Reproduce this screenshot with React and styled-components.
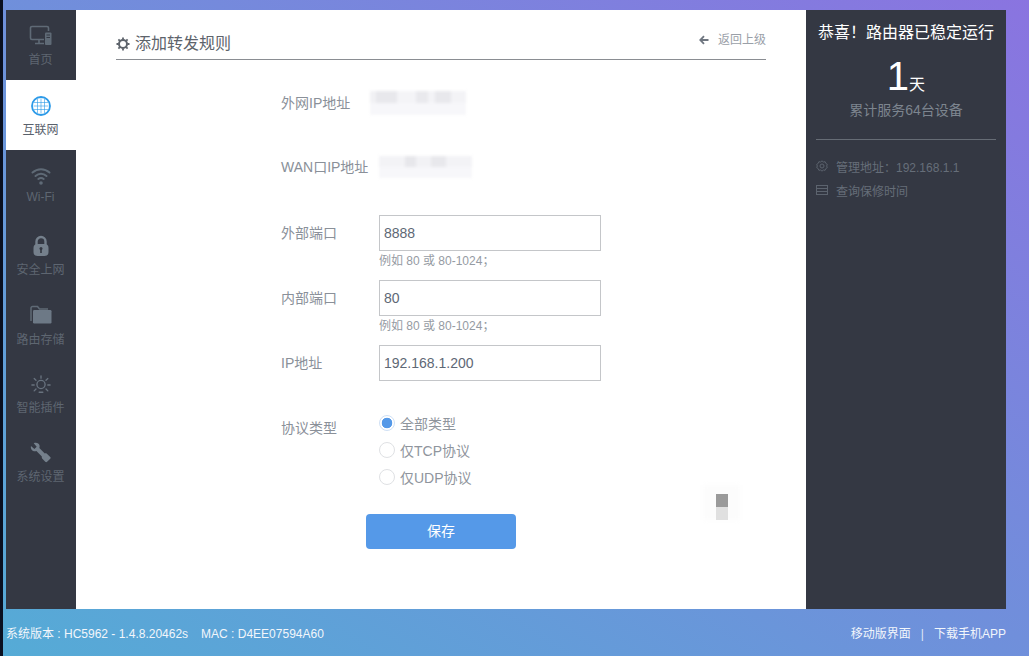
import styled, { createGlobalStyle } from 'styled-components'

const Global = createGlobalStyle`
  html, body { margin: 0; padding: 0; height: 100%; }
  body {
    font-family: "Liberation Sans", "Noto Sans CJK SC", sans-serif;
    overflow: hidden;
  }
  * { box-sizing: border-box; }
`

const Page = styled.div`
  width: 1029px;
  height: 656px;
  padding-top: 10px;
  border-left: 3px solid #0a1020;
  background: linear-gradient(to top right, #55abd6, #8a74e0);
  display: flex;
  flex-direction: column;
`

const Shell = styled.div`
  width: 1000px;
  height: 599px;
  margin-left: 3px;
  display: flex;
`

const Sidebar = styled.nav`
  width: 70px;
  background: #343843;
  flex-shrink: 0;
`

const NavItem = styled.div`
  height: 70px;
  padding-top: ${({ $top }) => $top}px;
  padding-right: 1px;
  display: flex;
  flex-direction: column;
  align-items: center;
  background: ${({ $active }) => ($active ? '#fff' : 'transparent')};
  color: ${({ $active }) => ($active ? '#59616c' : '#5e6671')};
`

const NavIcon = styled.div`
  height: 24px;
  display: flex;
  align-items: center;
  justify-content: center;
  color: #5f6a76;
`

const NavLabel = styled.span`
  margin-top: ${({ $gap }) => $gap}px;
  font-size: 12px;
  line-height: 16px;
  white-space: nowrap;
`

const Main = styled.main`
  position: relative;
  width: 730px;
  background: #fff;
  padding: 0 40px;
  flex-shrink: 0;
`

const Header = styled.header`
  height: 50px;
  display: flex;
  align-items: flex-end;
  justify-content: space-between;
  border-bottom: 1px solid #8a8d92;
`

const Title = styled.h1`
  margin: 0 0 4px;
  display: flex;
  align-items: center;
  gap: 5px;
  font-size: 16px;
  line-height: 22px;
  font-weight: 400;
  color: #5d636b;
`

const BackLink = styled.a`
  margin: 0 0 10px 0;
  display: flex;
  align-items: center;
  gap: 9px;
  font-size: 12px;
  line-height: 18px;
  color: #9aa0a8;
`

const Form = styled.form`
  display: flex;
  flex-direction: column;
`

const Row = styled.div`
  margin-top: ${({ $top }) => $top}px;
  padding-left: 165px;
  display: flex;
  align-items: ${({ $align }) => $align || 'center'};
`

const Label = styled.label`
  width: ${({ $width }) => $width || 98}px;
  flex-shrink: 0;
  font-size: 14px;
  line-height: 20px;
  color: #8a9099;
  white-space: nowrap;
  padding-top: ${({ $pad }) => $pad || 0}px;
`

const Redacted = styled.div`
  width: ${({ $width }) => $width}px;
  height: ${({ $height }) => $height}px;
  background:
    ${({ $stops }) => `linear-gradient(to right, ${$stops})`} top / 100% 50% no-repeat,
    #f7f7fa;
  filter: blur(1.5px);
`

const Field = styled.div`
  height: 65px;
`

const TextInput = styled.input`
  display: block;
  width: 222px;
  height: 36px;
  padding: 0 4px;
  border: 1px solid #c4c6c9;
  border-radius: 0;
  outline: none;
  background: #fff;
  font-family: inherit;
  font-size: 14px;
  color: #5e6875;
`

const Hint = styled.div`
  margin-top: 1px;
  font-size: 12px;
  line-height: 18px;
  color: #959ba3;
`

const RadioGroup = styled.div`
  display: flex;
  flex-direction: column;
`

const RadioRow = styled.label`
  height: 27px;
  display: flex;
  align-items: center;
  gap: 5px;
  font-size: 14px;
  color: #8f959d;
`

const Radio = styled.input`
  appearance: none;
  margin: 0;
  width: 16px;
  height: 16px;
  border-radius: 50%;
  border: 1px solid #dfe1e4;
  background: #fff;

  &:checked {
    border-color: #cfe0f5;
    background: radial-gradient(circle, #5599e8 0 5px, #fff 5.6px);
  }
`

const SaveButton = styled.button`
  align-self: center;
  margin-top: 24px;
  width: 150px;
  height: 35px;
  padding: 0 0 3px;
  border: 0;
  border-radius: 4px;
  background: #5599e8;
  color: #fff;
  font-family: inherit;
  font-size: 14px;
`

const Smudge = styled.div`
  position: absolute;
  left: 627px;
  top: 475px;
  width: 37px;
  height: 35px;
  background: #fcfcfc;
  filter: blur(2px);
`

const SmudgeDark = styled.div`
  position: absolute;
  left: 640px;
  top: 484px;
  width: 12px;
  height: 13px;
  background: #9a9a9a;
  box-shadow: 0 13px 0 #e0e0e0;
`

const Aside = styled.aside`
  width: 200px;
  background: #343843;
  padding: 0 10px;
  flex-shrink: 0;
  text-align: center;
`

const AsideTitle = styled.div`
  margin-top: 12px;
  font-size: 16px;
  line-height: 22px;
  color: #fff;
  white-space: nowrap;
`

const Uptime = styled.div`
  margin-top: 8px;
  height: 48px;
  display: flex;
  align-items: baseline;
  justify-content: center;
  color: #fff;
  font-size: 16px;
`

const UptimeNumber = styled.span`
  font-size: 40px;
  line-height: 48px;
`

const Served = styled.div`
  font-size: 14px;
  line-height: 20px;
  color: #7d858f;
`

const Divider = styled.hr`
  margin: 19px 0 0;
  border: 0;
  border-top: 1px solid #666c75;
`

const InfoList = styled.div`
  margin-top: 14px;
  display: flex;
  flex-direction: column;
`

const InfoRow = styled.div`
  height: 24px;
  display: flex;
  align-items: center;
  gap: 8px;
  font-size: 12px;
  color: #666e79;
  white-space: nowrap;
`

const Footer = styled.footer`
  width: 1000px;
  height: 47px;
  margin-left: 3px;
  display: flex;
  align-items: center;
  justify-content: space-between;
  font-size: 12px;
  color: #f2f6fb;
`

const FooterGroup = styled.div`
  display: flex;
  align-items: baseline;
  gap: ${({ $gap }) => $gap}px;
`

const FooterSep = styled.span`
  color: #dfe8f5;
  font-weight: 400;
`

function MonitorIcon() {
  return (
    <svg width="24" height="22" viewBox="0 0 24 22" fill="none" stroke="currentColor" strokeWidth="1.6">
      <path d="M15 14.5H3a1.5 1.5 0 0 1-1.500-1.500V3A1.500 1.500 0 0 1 3 1.500h15A1.500 1.500 0 0 1 19.500 3v3" />
      <path d="M6 18.500h9M10 15v3.500" />
      <rect x="16" y="7.500" width="6.500" height="12.500" rx="1" fill="currentColor" stroke="none" />
      <path d="M17.500 10h3.500M17.500 12.500h3.500" stroke="#343843" strokeWidth="1" />
    </svg>
  )
}

function GlobeIcon() {
  return (
    <svg width="20" height="20" viewBox="0 0 20 20" fill="none" stroke="#2c9ae8">
      <circle cx="10" cy="10" r="9" strokeWidth="1.800" />
      <path
        d="M3 6.500h14M2.500 10h15M3 13.500h14M6.500 3v14M10 2.500v15M13.500 3v14"
        strokeWidth=".8"
        opacity=".75"
      />
    </svg>
  )
}

function WifiIcon() {
  return (
    <svg width="20" height="20" viewBox="0 0 20 20" fill="none" stroke="currentColor" strokeWidth="2" strokeLinecap="round">
      <path d="M1.500 6.500c5-4.500 12-4.500 17 0" />
      <path d="M4.500 10c3.200-3 7.800-3 11 0" />
      <path d="M7.300 13c1.700-1.300 3.700-1.300 5.400 0" />
      <circle cx="10" cy="17" r="1.800" fill="currentColor" stroke="none" />
    </svg>
  )
}

function LockIcon() {
  return (
    <svg width="18" height="22" viewBox="0 0 18 22">
      <path
        fill="none"
        stroke="#75808c"
        strokeWidth="2.400"
        d="M4.500 10V6.500a4.500 4.500 0 0 1 9 0V10"
      />
      <rect x="1.500" y="9" width="15" height="12" rx="4" fill="#75808c" />
      <circle cx="9" cy="13.500" r="1.500" fill="#343843" />
      <rect x="8.200" y="14" width="1.600" height="4" fill="#343843" />
    </svg>
  )
}

function FolderIcon() {
  return (
    <svg width="22" height="20" viewBox="0 0 22 20">
      <path d="M1 16V3a1.500 1.500 0 0 1 1.500-1.500h5L9.500 4H18" fill="none" stroke="#5f6a76" strokeWidth="1.500" />
      <rect x="3" y="5" width="18.500" height="13.500" rx="1.200" fill="#6d7986" />
    </svg>
  )
}

function SunIcon() {
  return (
    <svg width="20" height="21" viewBox="0 0 22 22" fill="none" stroke="#68727e" strokeWidth="1.500" strokeLinecap="round">
      <circle cx="11" cy="11" r="4.500" />
      <path d="M11 1.500v2.500M3.500 4.500l2 1.800M18.500 4.500l-2 1.800M1 11.500h2.500M18.500 11.500H21M5.500 16l-2 2M16.500 16l2 2M9 19.500h4" />
    </svg>
  )
}

function WrenchIcon() {
  return (
    <svg width="21" height="21" viewBox="0 0 22 22" fill="#75808c">
      <path d="M1 4.200 4.600 7.400 7 5 3.900 1.300C6.400.3 9.400 1.100 10 3.600c.2 1 .1 1.900-.2 2.700L15.500 12c.7-.2 1.500-.1 2.200.3l3.500 3.300c.6.600.6 1.300 0 1.900l-3.300 3.300c-.6.600-1.300.6-1.900 0l-3.300-3.500c-.4-.7-.5-1.500-.3-2.200L6.700 9.400c-.8.300-1.800.4-2.700.2C1.600 9 .4 6.500 1 4.200z" />
    </svg>
  )
}

function GearIcon() {
  return (
    <svg width="14" height="14" viewBox="0 0 14 14" fill="none" stroke="#5d636b" strokeWidth="2">
      <circle cx="7" cy="7" r="4" />
      <path strokeWidth="1.800" d="M7 .5v2M7 11.500v2M.5 7h2M11.500 7h2M2.400 2.400l1.400 1.400M10.200 10.200l1.400 1.400M11.600 2.400l-1.400 1.400M3.800 10.200l-1.400 1.400" />
    </svg>
  )
}

function SmallGearIcon() {
  return (
    <svg width="12" height="12" viewBox="0 0 12 12" fill="none" stroke="#5c636e" strokeWidth="1">
      <circle cx="6" cy="6" r="2" />
      <path d="M6 .8l1.300 1.200 1.800-.3.700 1.700 1.500 1-.6 1.600.6 1.600-1.500 1-.7 1.700-1.800-.3L6 11.200 4.700 10l-1.800.3-.7-1.700-1.500-1L1.300 6 .7 4.400l1.500-1 .7-1.700 1.800.3z" />
    </svg>
  )
}

function CardIcon() {
  return (
    <svg width="12" height="10" viewBox="0 0 12 10" fill="none" stroke="#5c636e" strokeWidth="1">
      <rect x=".5" y=".5" width="11" height="9" />
      <path d="M1 3.500h10M1 6.500h10" />
    </svg>
  )
}

function BackArrow() {
  return (
    <svg width="10" height="10" viewBox="0 0 10 10" fill="none" stroke="#6f7680" strokeWidth="1.800">
      <path d="M9.500 5H1.500M5 1.200 1.300 5 5 8.800" />
    </svg>
  )
}

const navItems = [
  { label: '首页', icon: <MonitorIcon />, top: 14, gap: 4 },
  { label: '互联网', icon: <GlobeIcon />, top: 14, gap: 4, active: true },
  { label: 'Wi-Fi', icon: <WifiIcon />, top: 14, gap: 1 },
  { label: '安全上网', icon: <LockIcon />, top: 14, gap: 4 },
  { label: '路由存储', icon: <FolderIcon />, top: 13, gap: 5 },
  { label: '智能插件', icon: <SunIcon />, top: 12, gap: 4 },
  { label: '系统设置', icon: <WrenchIcon />, top: 10, gap: 5 },
]

const wanStops = '#f3f3f6 0 28%, #e7e7eb 28% 40%, #f2f2f5 40% 56%, #e8e8ec 56% 72%, #f3f3f6 72%'
const lanStops = '#f1f1f4 0 6%, #e8e8ec 6% 28%, #f4f4f7 28% 48%, #e9e9ed 48% 60%, #f3f3f6 60% 68%, #e8e8ec 68% 84%, #f3f3f6 84%'

export default function App() {
  return (
    <Page>
      <Global />
      <Shell>
        <Sidebar>
          {navItems.map((item) => (
            <NavItem key={item.label} $active={item.active} $top={item.top}>
              <NavIcon>{item.icon}</NavIcon>
              <NavLabel $gap={item.gap}>{item.label}</NavLabel>
            </NavItem>
          ))}
        </Sidebar>

        <Main>
          <Header>
            <Title>
              <GearIcon />
              添加转发规则
            </Title>
            <BackLink>
              <BackArrow />
              返回上级
            </BackLink>
          </Header>

          <Form onSubmit={(e) => e.preventDefault()}>
            <Row $top={31}>
              <Label $width={89}>外网IP地址</Label>
              <Redacted $width={96} $height={24} $stops={lanStops} />
            </Row>
            <Row $top={41}>
              <Label>WAN口IP地址</Label>
              <Redacted $width={93} $height={22} $stops={wanStops} />
            </Row>

            <Row $top={37} $align="flex-start">
              <Label $pad={8}>外部端口</Label>
              <Field>
                <TextInput readOnly value="8888" />
                <Hint>例如 80 或 80-1024；</Hint>
              </Field>
            </Row>
            <Row $top={0} $align="flex-start">
              <Label $pad={8}>内部端口</Label>
              <Field>
                <TextInput readOnly value="80" />
                <Hint>例如 80 或 80-1024；</Hint>
              </Field>
            </Row>
            <Row $top={0} $align="flex-start">
              <Label $pad={8}>IP地址</Label>
              <TextInput readOnly value="192.168.1.200" />
            </Row>

            <Row $top={28} $align="flex-start">
              <Label $pad={9}>协议类型</Label>
              <RadioGroup>
                <RadioRow>
                  <Radio type="radio" name="proto" defaultChecked />
                  全部类型
                </RadioRow>
                <RadioRow>
                  <Radio type="radio" name="proto" />
                  仅TCP协议
                </RadioRow>
                <RadioRow>
                  <Radio type="radio" name="proto" />
                  仅UDP协议
                </RadioRow>
              </RadioGroup>
            </Row>

            <SaveButton type="button">保存</SaveButton>
          </Form>

          <Smudge />
          <SmudgeDark />
        </Main>

        <Aside>
          <AsideTitle>恭喜！路由器已稳定运行</AsideTitle>
          <Uptime>
            <UptimeNumber>1</UptimeNumber>天
          </Uptime>
          <Served>累计服务64台设备</Served>
          <Divider />
          <InfoList>
            <InfoRow>
              <SmallGearIcon />
              管理地址：192.168.1.1
            </InfoRow>
            <InfoRow>
              <CardIcon />
              查询保修时间
            </InfoRow>
          </InfoList>
        </Aside>
      </Shell>

      <Footer>
        <FooterGroup $gap={13}>
          <span>系统版本 : HC5962 - 1.4.8.20462s</span>
          <span>MAC : D4EE07594A60</span>
        </FooterGroup>
        <FooterGroup $gap={10}>
          <span>移动版界面</span>
          <FooterSep>|</FooterSep>
          <span>下载手机APP</span>
        </FooterGroup>
      </Footer>
    </Page>
  )
}
